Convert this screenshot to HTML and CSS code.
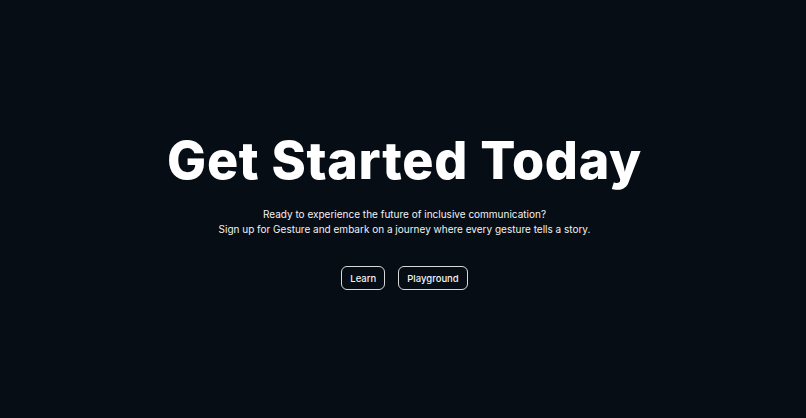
FILE: index.html
```html
<!DOCTYPE html>
<html lang="en">
<head>
<meta charset="utf-8">
<title>Get Started Today</title>
<link rel="stylesheet" href="styles.css">
</head>
<body>
<main class="hero">
  <h1 class="hero-title">Get Started Today</h1>
  <p class="hero-text">Ready to experience the future of inclusive communication?<br>Sign up for Gesture and embark on a journey where every gesture tells a story.</p>
  <div class="hero-actions">
    <a class="btn" href="#">Learn</a>
    <a class="btn" href="#">Playground</a>
  </div>
</main>
</body>
</html>
```

FILE: styles.css
```css
html, body {
  margin: 0;
  padding: 0;
  height: 100%;
}
body {
  background: #060d15;
  color: #ffffff;
  font-family: "Inter", "Noto Sans", sans-serif;
}
.hero {
  height: 100%;
  display: flex;
  flex-direction: column;
  align-items: center;
  justify-content: center;
  text-align: center;
  padding: 3px 0 0 3px;
  box-sizing: border-box;
}
.hero-title {
  margin: 0;
  font-size: 52px;
  font-weight: 800;
  line-height: 60px;
  letter-spacing: 0.7px;
}
.hero-text {
  margin: 16px 0 0;
  font-size: 10px;
  line-height: 15px;
  color: #f2f2f2;
}
.hero-actions {
  display: flex;
  gap: 13px;
  margin-top: 29px;
}
.btn {
  display: inline-flex;
  align-items: center;
  justify-content: center;
  height: 24px;
  padding: 0 8px;
  box-sizing: border-box;
  border: 1px solid #d9d9d9;
  border-radius: 6px;
  color: #f2f2f2;
  font-size: 9.5px;
  font-weight: 500;
  text-decoration: none;
}
```
